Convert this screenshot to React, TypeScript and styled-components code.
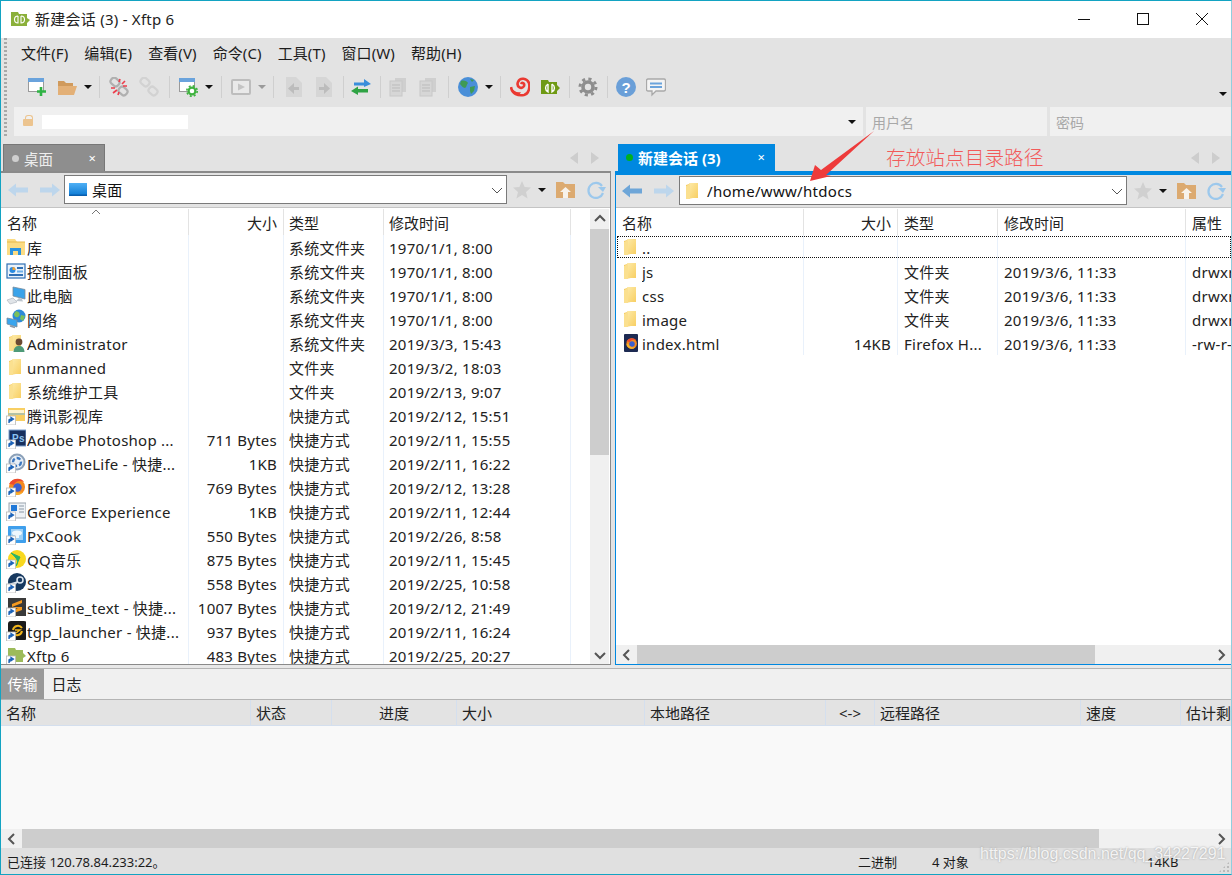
import React from "react";
import styled, { createGlobalStyle } from "styled-components";

const Global = createGlobalStyle`
  html, body { margin: 0; padding: 0; height: 875px; overflow: hidden; background: #e3e3e3; }
  #root { height: 875px; }
  * { box-sizing: border-box; }
`;

const Win = styled.div`
  position: relative; width: 1232px; height: 875px; display: flex; flex-direction: column;
  border: 1px solid #13a3c2; border-right-color: #8fcfdf; background: #e3e3e3; overflow: hidden;
  font-family: "Noto Sans", "Noto Sans CJK SC", sans-serif; font-size: 15px; color: #1c1c1c;
`;
const TitleBar = styled.div`
  height: 37px; flex: none; background: #fff; display: flex; align-items: center; padding: 0 0 2px 9px;
  font-size: 15px; color: #222; letter-spacing: .25px;
`;
const TitleText = styled.span` margin-left: 5px; flex: 1; `;
const WinBtn = styled.div`
  width: 59px; height: 35px; display: flex; align-items: center; justify-content: center;
`;
const TopBand = styled.div` display: flex; height: 98px; flex: none; padding-left: 3px; `;
const Grip = styled.div`
  width: 3px; flex: none;
  background: repeating-linear-gradient(to bottom, #a8a8a8 0 2px, #e3e3e3 2px 4px);
`;
const TopCol = styled.div` flex: 1; min-width: 0; display: flex; flex-direction: column; `;
const Menu = styled.div` height: 32px; display: flex; align-items: center; padding: 0 0 3px 14px; gap: 16px; `;
const MenuItem = styled.span` white-space: nowrap; letter-spacing: .1px; `;
const Toolbar = styled.div` height: 36px; display: flex; align-items: center; padding-left: 15px; padding-bottom: 3px; `;
const Tool = styled.div` width: 30px; height: 24px; display: flex; align-items: center; justify-content: center; flex: none; `;
const Sep = styled.div<{ $w: number }>`
  width: ${p => p.$w}px; height: 24px; flex: none; position: relative;
  &::after { content: ""; position: absolute; left: 50%; top: 1px; bottom: 1px; width: 1px; background: #cfcfcf; }
`;
const Caret = styled.div<{ $w?: number; $off?: boolean }>`
  width: ${p => p.$w ?? 12}px; height: 24px; flex: none; display: flex; align-items: center; justify-content: center;
  &::after { content: ""; border-left: 4px solid transparent; border-right: 4px solid transparent;
    border-top: 4px solid ${p => (p.$off ? "#9a9a9a" : "#111")}; }
`;
const EndCaret = styled(Caret)` margin-left: auto; margin-right: 2px; align-self: flex-end; height: 14px; margin-bottom: 2px; `;
const AddressRow = styled.div` height: 29px; margin-top: 1px; display: flex; gap: 3px; margin-left: 7px; `;
const Field = styled.div<{ $w?: number }>`
  background: #f0f0f0; height: 29px; display: flex; align-items: center; color: #a8a8a8; font-size: 14px;
  padding-left: 6px; flex: ${p => (p.$w ? `0 0 ${p.$w}px` : "1")}; position: relative;
`;
const Lock = styled.div` width: 10px; height: 7px; margin-left: 3px; background: #ecc48f; border-radius: 1px; position: relative; margin-top: 2px;
  &::before { content: ""; position: absolute; left: 2px; top: -4px; width: 6px; height: 4px; border: 1.5px solid #ecc48f; border-bottom: 0; border-radius: 3px 3px 0 0; } `;
const Blank = styled.div` width: 146px; height: 14px; margin-left: 9px; background: #fff; `;
const HostCaret = styled(Caret)` margin-left: auto; margin-right: 5px; `;

const TabRow = styled.div` height: 35px; flex: none; display: flex; align-items: flex-end; gap: 4px; `;
const TabSide = styled.div<{ $w?: number; $pad: number }>`
  flex: ${p => (p.$w ? `0 0 ${p.$w}px` : "1")}; display: flex; align-items: flex-end; padding-left: ${p => p.$pad}px; height: 27px; position: relative;
`;
const Tab = styled.div<{ $active?: boolean; $w: number }>`
  width: ${p => p.$w}px; height: 27px; display: flex; align-items: center; color: ${p => (p.$active ? "#fff" : "#eee")};
  background: ${p => (p.$active ? "#0088e0" : "#8e8e8e")};
  border: ${p => (p.$active ? "0" : "1px solid #777")}; border-bottom: 0;
  font-size: ${p => (p.$active ? 15 : 14.5)}px; font-weight: ${p => (p.$active ? 700 : 400)};
`;
const TabDot = styled.span<{ $c: string; $ml: number }>`
  width: 7px; height: 7px; border-radius: 50%; background: ${p => p.$c}; margin-left: ${p => p.$ml}px; margin-right: 5px;
`;
const TabClose = styled.span<{ $mr: number }>` margin-left: auto; margin-right: ${p => p.$mr}px; font-size: 13px; font-weight: 400; line-height: 1; color: #fff; `;
const TabNav = styled.div<{ $mr: number }>` margin-left: auto; margin-right: ${p => p.$mr}px; display: flex; gap: 13px; align-self: center; margin-top: 1px; `;
const Tri = styled.span<{ $dir: "l" | "r" }>`
  width: 0; height: 0; border-top: 6px solid transparent; border-bottom: 6px solid transparent;
  ${p => (p.$dir === "l" ? "border-right: 8px solid #cdcdcd;" : "border-left: 8px solid #cdcdcd;")}
`;

const Panes = styled.div` height: 494px; flex: none; display: flex; gap: 4px; `;
const Pane = styled.div<{ $w?: number; $blue?: boolean }>`
  flex: ${p => (p.$w ? `0 0 ${p.$w}px` : "1")}; min-width: 0; display: flex; flex-direction: column; position: relative;
  ${p => p.$blue
    ? "border-top: 4px solid #0088e0; border-left: 1px solid #0088e0; border-bottom: 1px solid #0088e0;"
    : "border-top: 2px solid #8a8a8a; border-right: 1px solid #8a8a8a; border-bottom: 1px solid #8a8a8a;"}
`;
const NavRow = styled.div<{ $blue?: boolean }>`
  height: ${p => (p.$blue ? 33 : 35)}px; flex: none; display: flex; align-items: center; border-bottom: 1px solid #c4c4c4; padding-bottom: 1px;
`;
const NavBtn = styled.div<{ $w: number }>` width: ${p => p.$w}px; flex: none; display: flex; justify-content: center; align-items: center; `;
const Combo = styled.div<{ $w: number }>`
  width: ${p => p.$w}px; height: 29px; flex: none; background: #fff; border: 1px solid #7a7a7a;
  display: flex; align-items: center; padding-left: 3px; font-size: 15px; color: #111; letter-spacing: .3px;
`;
const ComboText = styled.span` margin-left: 4px; flex: 1; `;
const ComboChevron = styled.div` margin-right: 3px; display: flex; `;

const Body = styled.div` flex: 1; min-height: 0; display: flex; background: #fff; overflow: hidden; `;
const Table = styled.div` flex: 1; min-width: 0; display: flex; flex-direction: column; overflow: hidden; position: relative; `;
const HeadRow = styled.div` height: 27px; flex: none; display: flex; background: #fff; padding-top: 1px; `;
const Rows = styled.div` flex: 1; min-height: 0; overflow: hidden; letter-spacing: .25px; `;
const RowBox = styled.div<{ $focus?: boolean }>`
  height: 24px; display: flex; position: relative;
  ${p => p.$focus && `&::after { content: ""; position: absolute; inset: 1px 0 1px 1px; border: 1px dotted #111; }`}
`;
const Cell = styled.div<{ $w: number; $right?: boolean; $head?: boolean; $last?: boolean; $pl?: number; $nudge?: boolean }>`
  flex: 0 0 ${p => p.$w}px; width: ${p => p.$w}px; height: 100%; display: flex; align-items: center; white-space: nowrap; overflow: hidden;
  padding: ${p => (p.$nudge ? 1 : 0)}px ${p => (p.$right ? 6 : 0)}px 0 ${p => p.$pl ?? 6}px; justify-content: ${p => (p.$right ? "flex-end" : "flex-start")};
  ${p => !p.$last && `border-right: 1px solid ${p.$head ? "#e3e3e3" : "#e9f1fb"};`}
  color: #222;
`;
const NameText = styled.span<{ $nudge?: boolean }>` margin: ${p => (p.$nudge ? 1 : 0)}px 0 0 1px; overflow: hidden; `;
const SortMark = styled.div` position: absolute; left: 90px; top: 0; display: flex; `;

const VBar = styled.div` width: 19px; flex: none; background: #f0f0f0; display: flex; flex-direction: column; margin: 1px 1px 0 0; `;
const VThumb = styled.div` height: 226px; background: #cdcdcd; `;
const VEnd = styled.div<{ $bottom?: boolean; $h: number }>`
  ${p => p.$bottom && "margin-top: auto;"} height: ${p => p.$h}px; display: flex; align-items: center; justify-content: center;
`;
const HBar = styled.div<{ $h: number }>` height: ${p => p.$h}px; flex: none; background: #f0f0f0; display: flex; align-items: center; `;
const HEnd = styled.div` width: 21px; flex: none; display: flex; justify-content: center; align-items: center; `;
const HThumb = styled.div<{ $w: number }>` width: ${p => p.$w}px; height: 100%; background: #cdcdcd; flex: none; `;
const HEndRight = styled(HEnd)` margin-left: auto; `;

const Gap = styled.div` height: 3px; flex: none; border-bottom: 0; background: #e8e8e8; `;
const Line = styled.div` height: 1px; flex: none; background: #b4b4b4; `;
const LogTabs = styled.div` height: 30px; flex: none; background: #f0f0f0; display: flex; `;
const LogTab = styled.div<{ $active?: boolean }>`
  width: ${p => (p.$active ? 43 : 45)}px; display: flex; align-items: center; justify-content: center; padding-bottom: 2px;
  background: ${p => (p.$active ? "#999" : "transparent")}; color: ${p => (p.$active ? "#fff" : "#222")};
`;
const TransHead = styled.div` height: 26px; flex: none; background: #e3e3e3; display: flex; border-bottom: 1px solid #d4dfee; overflow: hidden; `;
const TransCell = styled.div<{ $w: number; $center?: boolean; $last?: boolean }>`
  flex: 0 0 ${p => p.$w}px; display: flex; align-items: center; padding-left: ${p => (p.$center ? 0 : 5)}px; white-space: nowrap;
  justify-content: ${p => (p.$center ? "center" : "flex-start")};
  ${p => !p.$last && "border-right: 1px solid #d4dfee;"}
  color: #222; font-size: 15px;
`;
const TransBody = styled.div` flex: 1; min-height: 0; background: #f9f9f9; `;
const Status = styled.div` height: 26px; flex: none; background: #e0e0e0; display: flex; align-items: center; font-size: 13px; position: relative; color: #1c1c1c; padding-top: 1px; `;
const StatusCell = styled.div<{ $w?: number }>` flex: ${p => (p.$w ? `0 0 ${p.$w}px` : "1")}; padding-left: ${p => (p.$w ? 0 : 6)}px; white-space: nowrap; `;
const ResizeGrip = styled.div`
  position: absolute; right: 1px; bottom: 1px; width: 12px; height: 12px; opacity: .7;
  background: radial-gradient(circle, #aaa 1.4px, transparent 1.5px) 0 0 / 4px 4px;
  clip-path: polygon(100% 0, 100% 100%, 0 100%);
`;
const Watermark = styled.div`
  position: absolute; left: 979px; top: 844px; font-family: "Liberation Sans", sans-serif; font-size: 16px;
  color: rgba(255,255,255,.85); text-shadow: 0 0 2px rgba(110,110,110,.6); white-space: nowrap;
`;
const Annotation = styled.div`
  position: absolute; left: 885px; top: 143px; font-size: 19.7px; line-height: 28px; font-weight: 300; color: #f25a5a; white-space: nowrap;
`;
const ArrowOverlay = styled.svg` position: absolute; left: 790px; top: 120px; pointer-events: none; `;

/* ---------- drawings ---------- */
type S = { children?: React.ReactNode; w?: number; h?: number };
const Svg = ({ children, w = 20, h = 20 }: S) => (
  <svg width={w} height={h} viewBox={`0 0 ${w} ${h}`} fill="none">{children}</svg>
);

const Defs = () => (
  <svg width="0" height="0" style={{ position: "absolute" }}>
    <defs>
      <linearGradient id="fy" x1="0" y1="0" x2="1" y2="1">
        <stop offset="0" stopColor="#fdeaa8" /><stop offset="1" stopColor="#f8cf63" />
      </linearGradient>
      <linearGradient id="sc" x1="0" y1="0" x2="0" y2="1">
        <stop offset="0" stopColor="#4fb0f5" /><stop offset="1" stopColor="#0a78d2" />
      </linearGradient>
    </defs>
  </svg>
);

const Tall = () => (
  <>
    <path d="M3 4 L10 2 V17 L3 18 Z" fill="#f3c758" />
    <path d="M6 2 H15 V17 H6 Z" fill="url(#fy)" />
    <path d="M3 5 L7 3 V18 H3 Z" fill="#fbe08f" />
  </>
);
const FolderTall = () => <Svg><Tall /></Svg>;

const Shortcut = () => (
  <>
    <rect x="0.5" y="11" width="9" height="9" fill="#fff" stroke="#b8b8b8" strokeWidth=".8" />
    <path d="M3 18 V15 C3 14 4 14 6 14 M5 12.5 L7.5 14 L5 15.8 Z" stroke="#1c63b8" strokeWidth="1.3" fill="#1c63b8" />
  </>
);

const Ffx = ({ s = 1 }: { s?: number }) => (
  <g transform={`scale(${s})`}>
    <circle cx="11" cy="10" r="8" fill="#f58a1f" />
    <circle cx="11.5" cy="10.5" r="4.2" fill="#3b5fd0" />
    <path d="M3 7 C6 1 15 0 18 5 C14 3 9 4 8 8 C6 7 4 7 3 7Z" fill="#ee4a2e" />
    <path d="M3 11 C4 18 13 20 17 15 C12 17 7 15 6 10Z" fill="#f8b42a" />
  </g>
);

const FileIcon = ({ kind }: { kind: string }) => {
  switch (kind) {
    case "folder": return <FolderTall />;
    case "lib": return (
      <Svg>
        <path d="M1 2 H9 L11 5 H19 V18 H1 Z" fill="#fbdc84" />
        <path d="M1 5 H19" stroke="#e6b94a" />
        <path d="M4 18 V11 H15 V18 H12 V14 H7 V18 Z" fill="#2a93e0" />
      </Svg>
    );
    case "panel": return (
      <Svg>
        <rect x="1" y="3" width="18" height="14" fill="#e9f2fb" stroke="#2f6fb4" strokeWidth="1.2" />
        <circle cx="6.5" cy="9" r="3" fill="#2b8be0" />
        <path d="M6.5 9 V6 A3 3 0 0 1 9.5 9 Z" fill="#f0a030" />
        <rect x="11" y="6" width="6" height="2" fill="#2f6fb4" />
        <rect x="11" y="9.5" width="6" height="2" fill="#6fb0e8" />
        <rect x="3" y="13" width="14" height="2" fill="#2f6fb4" />
      </Svg>
    );
    case "pc": return (
      <Svg>
        <path d="M7 2 L19 4.5 V14 L7 11 Z" fill="#3aa3ea" stroke="#7a8b9a" strokeWidth=".8" />
        <path d="M13 13 L10 16 L17 16.5 L16 14 Z" fill="#bcc4cc" />
        <path d="M1 15 L7 13 L11 17 L4 19 Z" fill="#e0e4e8" stroke="#a8b0b8" strokeWidth=".6" />
      </Svg>
    );
    case "net": return (
      <Svg>
        <circle cx="13" cy="7" r="6.5" fill="#2d8ad8" />
        <path d="M10 2 C14 3 15 6 12 8 C10 9 8 7 8 5Z M15 6 L19 7 L17 12 L14 10Z" fill="#7cc05a" />
        <path d="M1 9 L11 11 V18 L1 15 Z" fill="#39a5ee" stroke="#7a8b9a" strokeWidth=".8" />
        <path d="M4 17 L9 18.5" stroke="#8a98a6" strokeWidth="1.6" />
      </Svg>
    );
    case "admin": return (
      <Svg>
        <Tall />
        <circle cx="13" cy="9" r="3.4" fill="#6b4a33" />
        <path d="M7.5 19 C8 14 10 13 13 13 C16 13 18 14 18.5 19 Z" fill="#4e9a78" />
      </Svg>
    );
    case "tx": return (
      <Svg>
        <path d="M2 3 H19 V16 H2 Z" fill="#f8cf63" />
        <path d="M3 5 H18 V8 H3 Z" fill="#fdf3cf" />
        <path d="M2 9 H19" stroke="#6fb5e8" />
        <Shortcut />
      </Svg>
    );
    case "ps": return (
      <Svg>
        <rect x="3" y="1" width="17" height="16" fill="#17305f" stroke="#7aa0d0" />
        <text x="6" y="13" fontSize="10" fontWeight="700" fill="#8cc4f2" fontFamily="Liberation Sans">Ps</text>
        <Shortcut />
      </Svg>
    );
    case "drive": return (
      <Svg>
        <circle cx="11" cy="9" r="8.5" fill="#8ba0b8" />
        <circle cx="11" cy="9" r="6.5" fill="#e8eff6" />
        <circle cx="11" cy="9" r="4" fill="none" stroke="#3d78c0" strokeWidth="2.4" strokeDasharray="4 2" />
        <Shortcut />
      </Svg>
    );
    case "ffx": return <Svg><Ffx /><Shortcut /></Svg>;
    case "gf": return (
      <Svg>
        <rect x="3" y="2" width="17" height="15" fill="#eef2f6" stroke="#9aa4ae" />
        <rect x="5" y="4" width="6" height="6" fill="#1f78d8" />
        <path d="M13 5 H18 M13 8 H18 M13 11 H18" stroke="#8a98a6" />
        <Shortcut />
      </Svg>
    );
    case "px": return (
      <Svg>
        <rect x="2" y="1" width="18" height="17" rx="1" fill="#3f9fec" />
        <rect x="5" y="4" width="12" height="11" fill="#9fd0f5" />
        <ellipse cx="11" cy="8" rx="5" ry="2.5" fill="#eef7fd" />
        <path d="M9 10 H13 V13 H9 Z" fill="#eef7fd" />
        <Shortcut />
      </Svg>
    );
    case "qq": return (
      <Svg>
        <circle cx="11" cy="10" r="9" fill="#f8d81f" />
        <path d="M5 4 L14 8 L10 17 C13 13 12 10 5 4Z" fill="#27b36a" stroke="#27b36a" />
        <Shortcut />
      </Svg>
    );
    case "steam": return (
      <Svg>
        <circle cx="11" cy="9" r="9" fill="#17395f" />
        <circle cx="14" cy="7" r="3" fill="none" stroke="#dfe8f2" strokeWidth="1.5" />
        <path d="M2 11 L12 8 L8 15Z" fill="#dfe8f2" />
        <Shortcut />
      </Svg>
    );
    case "sub": return (
      <Svg>
        <rect x="2" y="1" width="18" height="18" fill="#3a3a3a" />
        <path d="M6 7 L16 3 V6 L6 10Z M6 10 L16 13 V10 Z" fill="#f79a1e" />
        <path d="M8 13 L16 10 V13 L8 16Z" fill="#f79a1e" />
        <Shortcut />
      </Svg>
    );
    case "tgp": return (
      <Svg>
        <rect x="2" y="0" width="19" height="19" rx="3" fill="#1b1b1b" />
        <path d="M7 9 A5 5 0 0 1 16 7 M16 10 A5 5 0 0 1 7 12" stroke="#f2b61c" strokeWidth="2" />
        <path d="M9 9 H14 L10 12" stroke="#f2b61c" strokeWidth="1.4" />
        <Shortcut />
      </Svg>
    );
    case "xftp": return (
      <Svg>
        <path d="M2 3 H9 L10 5 H17 V17 H2Z" fill="#9dbb5a" />
        <path d="M17 8 L20 11 L17 13Z" fill="#9dbb5a" />
        <Shortcut />
      </Svg>
    );
    case "html": return (
      <Svg>
        <rect x="3" y="1" width="14" height="18" rx="1" fill="#1d2a52" />
        <g transform="translate(3.4 4) scale(.66)"><Ffx /></g>
      </Svg>
    );
    default: return <Svg />;
  }
};

const GREY = "#c4c4c4";
const Chain = ({ c = GREY }: { c?: string }) => (
  <>
    <rect x="1.5" y="1.5" width="9" height="7" rx="3" transform="rotate(40 6 5)" stroke={c} strokeWidth="2.2" />
    <rect x="9.5" y="10.5" width="9" height="7" rx="3" transform="rotate(40 14 14)" stroke={c} strokeWidth="2.2" />
  </>
);
const WinFrame = () => (
  <>
    <rect x="1.5" y="1.5" width="15" height="13" fill="#fff" stroke="#9a9a9a" />
    <rect x="1" y="1" width="16" height="4" fill="#6aa3dc" />
  </>
);
const DocG = ({ dir }: { dir: "l" | "r" }) => (
  <Svg>
    <path d="M2 0 H12 L18 6 V20 H2 Z" fill="#d6d6d6" />
    <path d={dir === "l" ? "M15 10 H10 V6 L4 11.5 L10 17 V13 H15 Z" : "M5 10 H10 V6 L16 11.5 L10 17 V13 H5 Z"} fill="#bcbcbc" />
  </Svg>
);
const Sheets = () => (
  <Svg>
    <rect x="7" y="1" width="11" height="14" fill="#cfcfcf" />
    <rect x="2" y="4" width="12" height="15" fill="#d6d6d6" stroke="#c8c8c8" />
    <path d="M4 8 H12 M4 11 H12 M4 14 H12" stroke="#bbb" />
  </Svg>
);
const ToolIcon = ({ kind }: { kind: string }) => {
  switch (kind) {
    case "new": return <Svg><WinFrame /><path d="M14 10 V19 M10 14.5 H19" stroke="#2fb344" strokeWidth="2.6" /></Svg>;
    case "open": return (
      <Svg>
        <path d="M1 4 H7 L9 6 H16 V9 H1Z" fill="#d09a5c" />
        <path d="M1 18 V9 H20 L17 18Z" fill="#e3b077" />
      </Svg>
    );
    case "disc": return (
      <Svg>
        <Chain c="#b0b0b0" />
        <path d="M11 2 L10 5 M16 4 L13 7 M18 9 L14 9 M2 11 L6 11 M4 16 L8 13 M9 18 L10 15" stroke="#ec3f4d" strokeWidth="1.7" />
      </Svg>
    );
    case "link": return <Svg><Chain c="#d2d2d2" /></Svg>;
    case "prop": return (
      <Svg>
        <WinFrame />
        <circle cx="14" cy="14" r="3.4" stroke="#3fb23f" strokeWidth="2.2" fill="#fff" />
        <circle cx="14" cy="14" r="5.2" stroke="#3fb23f" strokeWidth="1.6" strokeDasharray="2 2.1" />
      </Svg>
    );
    case "play": return (
      <Svg>
        <rect x="1" y="3" width="18" height="14" rx="1" fill="#e9e9e9" stroke="#bdbdbd" strokeWidth="2" />
        <path d="M7 6.5 L14 10 L7 13.5Z" fill="#c4c4c4" />
      </Svg>
    );
    case "docl": return <DocG dir="l" />;
    case "docr": return <DocG dir="r" />;
    case "xfer": return (
      <Svg>
        <path d="M3 5.5 H13 V2 L20 7 L13 10 V8.5 H3 Z" fill="#3a8edb" />
        <path d="M17 12 H7 V9.5 L0 14 L7 18 V15.5 H17Z" fill="#2fa344" />
      </Svg>
    );
    case "copy": return <Sheets />;
    case "paste": return <Sheets />;
    case "globe": return (
      <Svg>
        <circle cx="10" cy="10" r="10" fill="#4a8fd8" />
        <path d="M3 4 C6 3 9 4 10 6 C8 8 9 10 7 11 C5 11 3 8 2 7Z M12 10 L17 9 L16 14 L13 17 L12 14Z M12 2 L16 3 L14 5Z" fill="#3f9a55" />
      </Svg>
    );
    case "snail": return (
      <Svg>
        <path d="M1 10 C2 17 8 19 14 18 C19 17 20 10 19 6 C17 1 10 0 8 5 C6 10 12 13 14 9 C15 6 12 5 11 7" stroke="#ea3a32" strokeWidth="2.6" fill="none" />
        <path d="M1 10 C3 14 7 16 11 15 L9 18 C5 18 1 15 1 10Z" fill="#ea3a32" />
      </Svg>
    );
    case "xftp": return (
      <Svg>
        <path d="M1 3 H8 L9 5 H17 V8 L20 11 L17 14 V17 H1Z" fill="#6f9a14" />
        <path d="M8 7 A4.5 4.5 0 0 0 8 15 V7 M12 7 V15 A4.5 4.5 0 0 0 12 7" stroke="#fff" strokeWidth="1.4" fill="none" />
      </Svg>
    );
    case "gear": return (
      <Svg>
        <circle cx="10" cy="10" r="5" stroke="#8e8e8e" strokeWidth="3.6" />
        <circle cx="10" cy="10" r="8" stroke="#8e8e8e" strokeWidth="3" strokeDasharray="3.1 3.2" />
      </Svg>
    );
    case "help": return (
      <Svg>
        <circle cx="10" cy="10" r="10" fill="#6a9fd8" />
        <text x="10" y="15.5" textAnchor="middle" fontSize="15" fontWeight="700" fill="#fff" fontFamily="Liberation Sans">?</text>
      </Svg>
    );
    case "chat": return (
      <Svg>
        <path d="M2 2 H18 Q19.5 2 19.5 4 V12 Q19.5 14 18 14 H10 L6 18 V14 H2 Q0.5 14 .5 12 V4 Q.5 2 2 2Z" fill="#f4f4f4" stroke="#a9a9a9" strokeWidth="1.3" />
        <path d="M4 6.5 H16 M4 10 H16" stroke="#6aa3dc" strokeWidth="1.8" />
      </Svg>
    );
    default: return <Svg />;
  }
};

const Arrow = ({ dir, c }: { dir: "l" | "r"; c: string }) => (
  <Svg h={16}>
    <path d={dir === "l" ? "M0 8 L8 1.5 V5.5 H20 V10.5 H8 V14.5Z" : "M20 8 L12 1.5 V5.5 H0 V10.5 H12 V14.5Z"} fill={c} />
  </Svg>
);
const Star = () => (
  <Svg w={18} h={18}><path d="M9 0 L11.6 6 L18 6.6 L13 11 L14.6 17.5 L9 14 L3.4 17.5 L5 11 L0 6.6 L6.4 6Z" fill="#d0d0d0" /></Svg>
);
const FolderUp = () => (
  <Svg w={19} h={18}>
    <path d="M0 1 H7 L9 3 H19 V17 H0Z" fill="#dcaa70" />
    <path d="M9.5 6 L15 11 H12 V17 H7 V11 H4Z" fill="#f7f2ea" />
  </Svg>
);
const Refresh = () => (
  <Svg>
    <path d="M16 6 A7.5 7.5 0 1 0 17 13" stroke="#9cc8ec" strokeWidth="2.2" />
    <path d="M12 7 H20 L17 12Z" fill="#9cc8ec" />
  </Svg>
);
const Chev = ({ d, c = "#555", w = 2 }: { d: string; c?: string; w?: number }) => (
  <Svg w={12} h={12}><path d={d} stroke={c} strokeWidth={w} /></Svg>
);
const CHEV_DOWN = "M1 4 L6 9 L11 4";
const CHEV_UP = "M1 8 L6 3 L11 8";
const CHEV_LEFT = "M8 1 L3 6 L8 11";
const CHEV_RIGHT = "M4 1 L9 6 L4 11";

/* ---------- data ---------- */
type Row = [string, string, string, string, string];
const LEFT: Row[] = [
  ["lib", "库", "", "系统文件夹", "1970/1/1, 8:00"],
  ["panel", "控制面板", "", "系统文件夹", "1970/1/1, 8:00"],
  ["pc", "此电脑", "", "系统文件夹", "1970/1/1, 8:00"],
  ["net", "网络", "", "系统文件夹", "1970/1/1, 8:00"],
  ["admin", "Administrator", "", "系统文件夹", "2019/3/3, 15:43"],
  ["folder", "unmanned", "", "文件夹", "2019/3/2, 18:03"],
  ["folder", "系统维护工具", "", "文件夹", "2019/2/13, 9:07"],
  ["tx", "腾讯影视库", "", "快捷方式", "2019/2/12, 15:51"],
  ["ps", "Adobe Photoshop ...", "711 Bytes", "快捷方式", "2019/2/11, 15:55"],
  ["drive", "DriveTheLife - 快捷...", "1KB", "快捷方式", "2019/2/11, 16:22"],
  ["ffx", "Firefox", "769 Bytes", "快捷方式", "2019/2/12, 13:28"],
  ["gf", "GeForce Experience", "1KB", "快捷方式", "2019/2/11, 12:44"],
  ["px", "PxCook", "550 Bytes", "快捷方式", "2019/2/26, 8:58"],
  ["qq", "QQ音乐", "875 Bytes", "快捷方式", "2019/2/11, 15:45"],
  ["steam", "Steam", "558 Bytes", "快捷方式", "2019/2/25, 10:58"],
  ["sub", "sublime_text - 快捷...", "1007 Bytes", "快捷方式", "2019/2/12, 21:49"],
  ["tgp", "tgp_launcher - 快捷...", "937 Bytes", "快捷方式", "2019/2/11, 16:24"],
  ["xftp", "Xftp 6", "483 Bytes", "快捷方式", "2019/2/25, 20:27"],
];
const RIGHT: Row[] = [
  ["folder", "..", "", "", ""],
  ["folder", "js", "", "文件夹", "2019/3/6, 11:33"],
  ["folder", "css", "", "文件夹", "2019/3/6, 11:33"],
  ["folder", "image", "", "文件夹", "2019/3/6, 11:33"],
  ["html", "index.html", "14KB", "Firefox H...", "2019/3/6, 11:33"],
];
const RIGHT_ATTR = ["", "drwxr-xr-x", "drwxr-xr-x", "drwxr-xr-x", "-rw-r--r--"];
const isLatin = (s: string) => /^[\x00-\x7f]+$/.test(s);

const LW = [188, 95, 100, 187];
const RW = [188, 94, 100, 188, 60];
const TW = [250, 81, 125, 188, 181, 49, 206, 100, 60];
const TH = ["名称", "状态", "进度", "大小", "本地路径", "<->", "远程路径", "速度", "估计剩余时间"];

export default function App() {
  return (
    <Win>
      <Global />
      <Defs />
      <TitleBar>
        <Svg h={18}>
          <path d="M1 2 H8 L9 4 H17 V8 L20 10 L17 13 V16 H1Z" fill="#8bb03a" />
          <path d="M8 6 A3.5 3.5 0 0 0 8 13 V6 M11 6 V13 A3.5 3.5 0 0 0 11 6" stroke="#fff" strokeWidth="1.1" fill="none" />
        </Svg>
        <TitleText>新建会话 (3) - Xftp 6</TitleText>
        <WinBtn><Svg w={12} h={12}><path d="M0 6.5 H12" stroke="#111" /></Svg></WinBtn>
        <WinBtn><Svg w={12} h={12}><rect x=".5" y=".5" width="11" height="11" stroke="#111" /></Svg></WinBtn>
        <WinBtn><Svg w={12} h={12}><path d="M0 0 L12 12 M12 0 L0 12" stroke="#111" /></Svg></WinBtn>
      </TitleBar>

      <TopBand>
        <Grip />
        <TopCol>
          <Menu>
            {["文件(F)", "编辑(E)", "查看(V)", "命令(C)", "工具(T)", "窗口(W)", "帮助(H)"].map(m => <MenuItem key={m}>{m}</MenuItem>)}
          </Menu>
          <Toolbar>
            <Tool><ToolIcon kind="new" /></Tool>
            <Tool><ToolIcon kind="open" /></Tool>
            <Caret />
            <Sep $w={10} />
            <Tool><ToolIcon kind="disc" /></Tool>
            <Tool><ToolIcon kind="link" /></Tool>
            <Sep $w={9} />
            <Tool><ToolIcon kind="prop" /></Tool>
            <Caret />
            <Sep $w={11} />
            <Tool><ToolIcon kind="play" /></Tool>
            <Caret $w={11} $off />
            <Sep $w={12} />
            <Tool><ToolIcon kind="docl" /></Tool>
            <Tool><ToolIcon kind="docr" /></Tool>
            <Sep $w={7} />
            <Tool><ToolIcon kind="xfer" /></Tool>
            <Sep $w={7} />
            <Tool><ToolIcon kind="copy" /></Tool>
            <Tool><ToolIcon kind="paste" /></Tool>
            <Sep $w={10} />
            <Tool><ToolIcon kind="globe" /></Tool>
            <Caret $w={11} />
            <Sep $w={11} />
            <Tool><ToolIcon kind="snail" /></Tool>
            <Tool><ToolIcon kind="xftp" /></Tool>
            <Sep $w={8} />
            <Tool><ToolIcon kind="gear" /></Tool>
            <Sep $w={8} />
            <Tool><ToolIcon kind="help" /></Tool>
            <Tool><ToolIcon kind="chat" /></Tool>
            <EndCaret />
          </Toolbar>
          <AddressRow>
            <Field>
              <Lock />
              <Blank />
              <HostCaret />
            </Field>
            <Field $w={181}>用户名</Field>
            <Field $w={181}>密码</Field>
          </AddressRow>
        </TopCol>
      </TopBand>

      <TabRow>
        <TabSide $w={610} $pad={2}>
          <Tab $w={102}>
            <TabDot $c="#cfcfcf" $ml={8} />
            <span>桌面</span>
            <TabClose $mr={8}>×</TabClose>
          </Tab>
          <TabNav $mr={12}><Tri $dir="l" /><Tri $dir="r" /></TabNav>
        </TabSide>
        <TabSide $pad={3}>
          <Tab $active $w={157}>
            <TabDot $c="#00b020" $ml={8} />
            <span>新建会话 (3)</span>
            <TabClose $mr={10}>×</TabClose>
          </Tab>
          <TabNav $mr={11}><Tri $dir="l" /><Tri $dir="r" /></TabNav>
        </TabSide>
      </TabRow>

      <Panes>
        <Pane $w={610}>
          <NavRow>
            <NavBtn $w={34}><Arrow dir="l" c="#bdd6ec" /></NavBtn>
            <NavBtn $w={29}><Arrow dir="r" c="#bdd6ec" /></NavBtn>
            <Combo $w={443}>
              <Svg w={20} h={16}><rect x="1" y="1" width="18" height="13" fill="url(#sc)" /><rect x="1" y="12.5" width="18" height="1.5" fill="#0a5fae" /></Svg>
              <ComboText>桌面</ComboText>
              <ComboChevron><Chev d={CHEV_DOWN} c="#555" w={1} /></ComboChevron>
            </Combo>
            <NavBtn $w={30}><Star /></NavBtn>
            <Caret $w={10} />
            <NavBtn $w={36}><FolderUp /></NavBtn>
            <NavBtn $w={25}><Refresh /></NavBtn>
          </NavRow>
          <Body>
            <Table>
              <HeadRow>
                <Cell $w={LW[0]} $head>名称</Cell>
                <Cell $w={LW[1]} $head $right>大小</Cell>
                <Cell $w={LW[2]} $head $pl={5}>类型</Cell>
                <Cell $w={LW[3]} $head $pl={5}>修改时间</Cell>
                <SortMark><Chev d="M1 6 L5 2 L9 6" c="#777" w={1} /></SortMark>
              </HeadRow>
              <Rows>
                {LEFT.map(r => (
                  <RowBox key={r[1]}>
                    <Cell $w={LW[0]} $pl={5}><FileIcon kind={r[0]} /><NameText $nudge={isLatin(r[1])}>{r[1]}</NameText></Cell>
                    <Cell $w={LW[1]} $right $nudge>{r[2]}</Cell>
                    <Cell $w={LW[2]} $pl={5}>{r[3]}</Cell>
                    <Cell $w={LW[3]} $pl={5} $nudge>{r[4]}</Cell>
                  </RowBox>
                ))}
              </Rows>
            </Table>
            <VBar>
              <VEnd $h={20}><Chev d={CHEV_UP} /></VEnd>
              <VThumb />
              <VEnd $bottom $h={18}><Chev d={CHEV_DOWN} /></VEnd>
            </VBar>
          </Body>
        </Pane>

        <Pane $blue>
          <NavRow $blue>
            <NavBtn $w={32}><Arrow dir="l" c="#6ea6d8" /></NavBtn>
            <NavBtn $w={31}><Arrow dir="r" c="#bdd6ec" /></NavBtn>
            <Combo $w={448}>
              <Svg w={20} h={18}><g transform="translate(0 -1)"><Tall /></g></Svg>
              <ComboText>/home/www/htdocs</ComboText>
              <ComboChevron><Chev d={CHEV_DOWN} c="#555" w={1} /></ComboChevron>
            </Combo>
            <NavBtn $w={32}><Star /></NavBtn>
            <Caret $w={8} />
            <NavBtn $w={38}><FolderUp /></NavBtn>
            <NavBtn $w={22}><Refresh /></NavBtn>
          </NavRow>
          <Body>
            <Table>
              <HeadRow>
                <Cell $w={RW[0]} $head>名称</Cell>
                <Cell $w={RW[1]} $head $right>大小</Cell>
                <Cell $w={RW[2]} $head>类型</Cell>
                <Cell $w={RW[3]} $head>修改时间</Cell>
                <Cell $w={RW[4]} $head $last>属性</Cell>
              </HeadRow>
              <Rows>
                {RIGHT.map((r, i) => (
                  <RowBox key={r[1]} $focus={i === 0}>
                    <Cell $w={RW[0]} $pl={5}><FileIcon kind={r[0]} /><NameText $nudge>{r[1]}</NameText></Cell>
                    <Cell $w={RW[1]} $right $nudge>{r[2]}</Cell>
                    <Cell $w={RW[2]} $nudge={i === 4}>{r[3]}</Cell>
                    <Cell $w={RW[3]} $nudge>{r[4]}</Cell>
                    <Cell $w={RW[4]} $last $nudge>{RIGHT_ATTR[i]}</Cell>
                  </RowBox>
                ))}
              </Rows>
              <HBar $h={19}>
                <HEnd><Chev d={CHEV_LEFT} /></HEnd>
                <HThumb $w={458} />
                <HEndRight><Chev d={CHEV_RIGHT} /></HEndRight>
              </HBar>
            </Table>
          </Body>
        </Pane>
      </Panes>

      <Gap />
      <Line />
      <LogTabs>
        <LogTab $active>传输</LogTab>
        <LogTab>日志</LogTab>
      </LogTabs>
      <Line />
      <TransHead>
        {TH.map((t, i) => (
          <TransCell key={t} $w={TW[i]} $center={i === 2 || i === 5} $last={i === 8}>{t}</TransCell>
        ))}
      </TransHead>
      <TransBody />
      <HBar $h={19}>
        <HEnd><Chev d={CHEV_LEFT} /></HEnd>
        <HThumb $w={1077} />
        <HEndRight><Chev d={CHEV_RIGHT} /></HEndRight>
      </HBar>
      <Status>
        <StatusCell>已连接 120.78.84.233:22。</StatusCell>
        <StatusCell $w={74}>二进制</StatusCell>
        <StatusCell $w={215}>4 对象</StatusCell>
        <StatusCell $w={84}>14KB</StatusCell>
        <ResizeGrip />
      </Status>

      <Annotation>存放站点目录路径</Annotation>
      <ArrowOverlay width="100" height="70" viewBox="790 120 100 70">
        <path d="M809 180 L814 164 L820 169 L873 130 L825 174 L830 175 Z" fill="#ee3b3b" />
      </ArrowOverlay>
      <Watermark>https://blog.csdn.net/qq_34227291</Watermark>
    </Win>
  );
}
